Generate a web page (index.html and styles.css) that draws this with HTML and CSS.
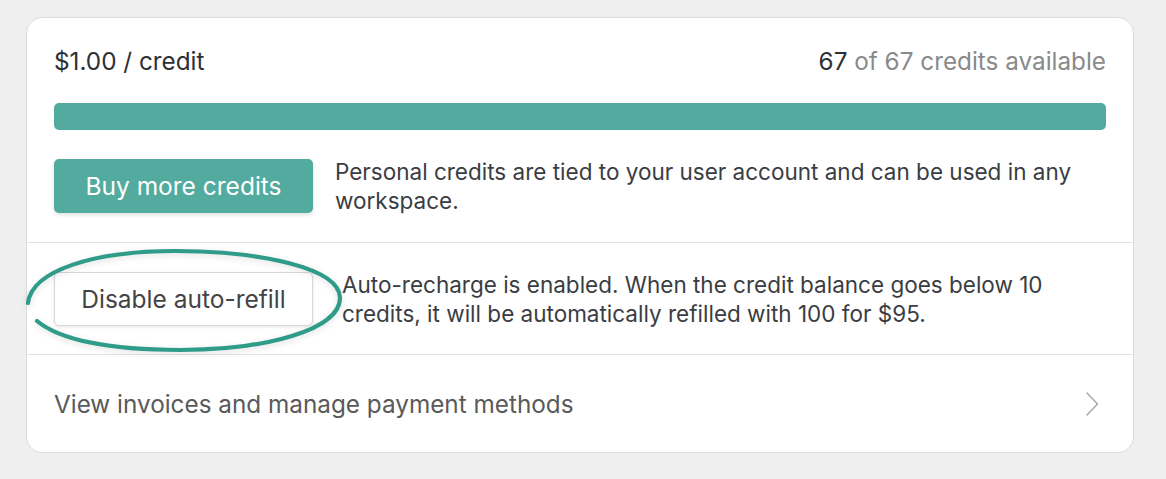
FILE: index.html
```html
<!DOCTYPE html>
<html lang="en">
<head>
<meta charset="utf-8">
<title>Credits</title>
<link rel="stylesheet" href="styles.css">
</head>
<body>
<div class="page">
  <div class="card">
    <section class="section top">
      <div class="header">
        <span class="price">$1.00 / credit</span>
        <span class="avail"><span class="strong">67</span> of 67 credits available</span>
      </div>
      <div class="bar"><div class="bar-fill" style="width:100%"></div></div>
      <div class="row">
        <button class="btn btn-primary">Buy more credits</button>
        <p class="desc">Personal credits are tied to your user account and can be used in any workspace.</p>
      </div>
    </section>
    <section class="section mid">
      <div class="row row-wide">
        <button class="btn btn-secondary">Disable auto-refill</button>
        <p class="desc">Auto-recharge is enabled. When the credit balance goes below 10 credits, it will be automatically refilled with 100 for $95.</p>
      </div>
    </section>
    <a class="section link" href="#">
      <span>View invoices and manage payment methods</span>
      <svg class="chevron" width="14" height="26" viewBox="0 0 14 26"><path d="M2 2 L12.5 13 L2 24" fill="none" stroke="#a8a8a8" stroke-width="1.5" stroke-linecap="round" stroke-linejoin="round"/></svg>
    </a>
    <svg class="circle" width="380" height="380" viewBox="0 0 380 380"><path d="M28 303 C 32 270, 95 251, 175 251 C 260 251, 340 268, 340 298 C 340 330, 265 350, 180 350 C 110 350, 60 340, 37 321" fill="none" stroke="#2f9c89" stroke-width="4.2" stroke-linecap="round"/></svg>
  </div>
</div>
</body>
</html>
```

FILE: styles.css
```css
* { box-sizing: border-box; }
html, body { margin: 0; padding: 0; }
body {
  background: #efefef;
  font-family: Inter, "Noto Sans", sans-serif;
  color: #3a3c40;
}
.page {
  padding: 17px 0 0 26px;
  height: 479px;
}
.card {
  position: relative;
  width: 1108px;
  background: #fff;
  border: 1px solid #dcdcdc;
  border-radius: 16px;
}
.section {
  padding: 0 27px;
}
.top {
  padding-top: 28px;
  padding-bottom: 27px;
  border-bottom: 1px solid #e2e2e2;
}
.header {
  display: flex;
  justify-content: space-between;
  font-size: 24.3px;
  line-height: 30px;
}
.price { color: #2e3034; }
.avail { color: #8a8a8a; }
.avail .strong { color: #2e3034; }
.bar {
  margin-top: 27px;
  height: 27px;
  border-radius: 5px;
  background: #e5e5e5;
  overflow: hidden;
}
.bar-fill {
  height: 100%;
  background: #52ab9e;
}
.row {
  display: flex;
  align-items: center;
  gap: 22px;
  margin-top: 27px;
}
.row-wide { gap: 29px; margin-top: 0; }
.btn {
  flex: none;
  width: 259px;
  height: 54px;
  border-radius: 5px;
  font-family: Inter, "Noto Sans", sans-serif;
  font-size: 24.5px;
  cursor: pointer;
}
.btn-primary {
  background: #52ab9e;
  border: none;
  color: #fff;
  box-shadow: 0 2px 4px rgba(0,0,0,0.12);
}
.btn-secondary {
  background: #fff;
  border: 1px solid #d8d8d8;
  color: #444;
  box-shadow: 0 1px 3px rgba(0,0,0,0.1);
}
.desc {
  margin: 0;
  font-size: 22.5px;
  line-height: 29px;
  color: #3a3d43;
}
.mid {
  padding-top: 27px;
  padding-bottom: 26px;
  border-bottom: 1px solid #e2e2e2;
}
.link {
  display: flex;
  align-items: center;
  justify-content: space-between;
  height: 97px;
  font-size: 24.3px;
  color: #5a5a5a;
  text-decoration: none;
  padding-right: 34px;
}
.chevron { display: block; }
.circle {
  position: absolute;
  left: -27px;
  top: -18px;
  pointer-events: none;
  filter: drop-shadow(0 2px 3px rgba(0,0,0,0.12));
}
```
